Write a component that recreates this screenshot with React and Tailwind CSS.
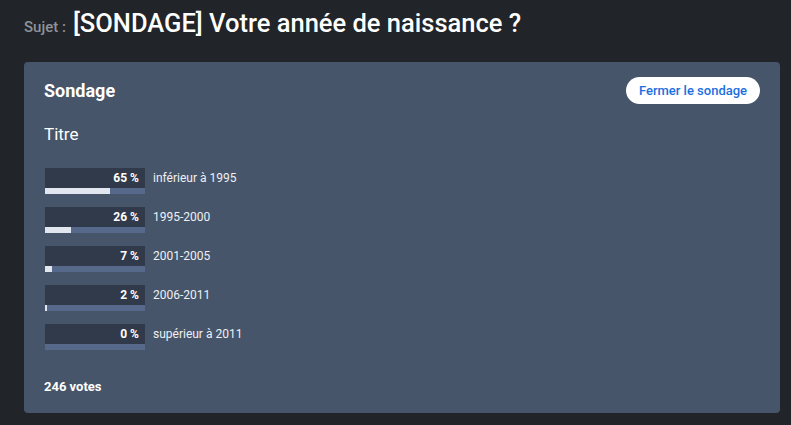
import React from "react";

const rows = [
  { p: 65, label: "inférieur à 1995" },
  { p: 26, label: "1995-2000" },
  { p: 7, label: "2001-2005" },
  { p: 2, label: "2006-2011" },
  { p: 0, label: "supérieur à 2011" },
];

export default function App() {
  return (
    <div className="min-h-[425px] w-[791px] bg-[#212428] font-['Roboto',sans-serif] overflow-hidden">
      <div className="flex items-baseline pl-6 pt-[3px] h-[62px]">
        <span className="text-[15px] font-medium text-[#8e939a] mr-[7px]">Sujet :</span>
        <span className="text-[25.5px] font-medium text-white leading-[40px]">[SONDAGE] Votre année de naissance ?</span>
      </div>
      <div className="ml-6 w-[756px] h-[351px] rounded-[4px] bg-[#465569] pl-5 pr-5 pt-[15px]">
        <div className="flex items-center justify-between h-[27px]">
          <span className="text-[18px] font-bold text-white">Sondage</span>
          <button className="h-[27px] w-[134px] rounded-full bg-white text-[13px] font-medium text-[#1a6fe0]">
            Fermer le sondage
          </button>
        </div>
        <div className="mt-[18px] text-[17px] text-white leading-[24px]">Titre</div>
        <div className="mt-[22px] flex flex-col gap-[13px]">
          {rows.map((r) => (
            <div key={r.label} className="flex items-start">
              <div className="w-[100px] ml-px">
                <div className="h-5 bg-[#313a4a] flex items-center justify-end pr-[6px] text-[12px] font-bold text-white">
                  {r.p} %
                </div>
                <div className="h-[6px] bg-[#56698a]">
                  <div className="h-full bg-[#e2e6ee]" style={{ width: `${r.p}%` }} />
                </div>
              </div>
              <div className="ml-2 h-5 flex items-center text-[12px] text-[#eef0f4]">{r.label}</div>
            </div>
          ))}
        </div>
        <div className="mt-[27px] text-[13px] font-bold text-white">246 votes</div>
      </div>
    </div>
  );
}
